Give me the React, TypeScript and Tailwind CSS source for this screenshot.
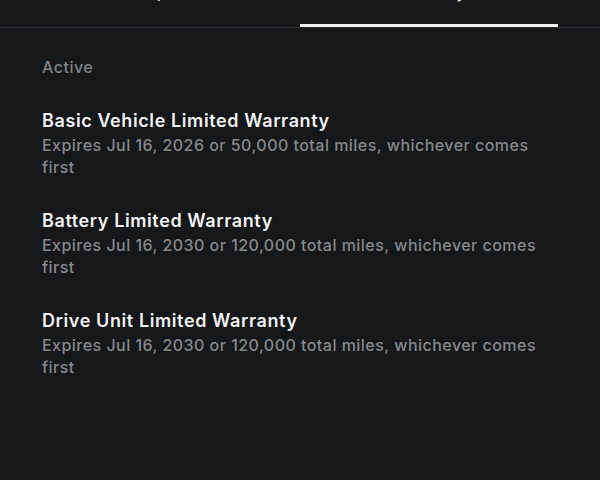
const warranties = [
  {
    title: "Basic Vehicle Limited Warranty",
    detail: "Expires Jul 16, 2026 or 50,000 total miles, whichever comes first",
  },
  {
    title: "Battery Limited Warranty",
    detail: "Expires Jul 16, 2030 or 120,000 total miles, whichever comes first",
  },
  {
    title: "Drive Unit Limited Warranty",
    detail: "Expires Jul 16, 2030 or 120,000 total miles, whichever comes first",
  },
];

const Tab = ({ label, active }: { label: string; active?: boolean }) => (
  <div className="flex-1 flex flex-col">
    <div className="h-6 text-center text-[16px] leading-6 font-medium tracking-[0.5px] text-[#e5e5e5] mb-[20px]">
      {label}
    </div>
    <div className={active ? "h-[3px] bg-[#f0f0f0]" : "h-[3px]"} />
  </div>
);

const App = () => {
  return (
    <div
      className="w-[600px] h-[480px] bg-[#151719] overflow-hidden"
      style={{ fontFamily: "Inter, 'Noto Sans', sans-serif" }}
    >
      <div className="-mt-[20px] border-b border-[#2b2e31] px-[42px] flex">
        <Tab label="Specs" />
        <Tab label="Warranty" active />
      </div>

      <div className="px-[42px] pt-[27px] flex flex-col gap-[30px]">
        <p className="text-[16px] leading-6 font-medium tracking-[0.5px] text-[#7f8284]">Active</p>
        <div className="flex flex-col gap-[31px]">
          {warranties.map((w) => (
            <div key={w.title}>
              <h3 className="text-[18px] leading-6 font-semibold tracking-[0.6px] text-[#f2f2f2]">
                {w.title}
              </h3>
              <p className="mt-[1px] text-[16px] leading-[22px] font-medium tracking-[0.47px] text-[#86898b]">
                {w.detail}
              </p>
            </div>
          ))}
        </div>
      </div>
    </div>
  );
};

export default App;
